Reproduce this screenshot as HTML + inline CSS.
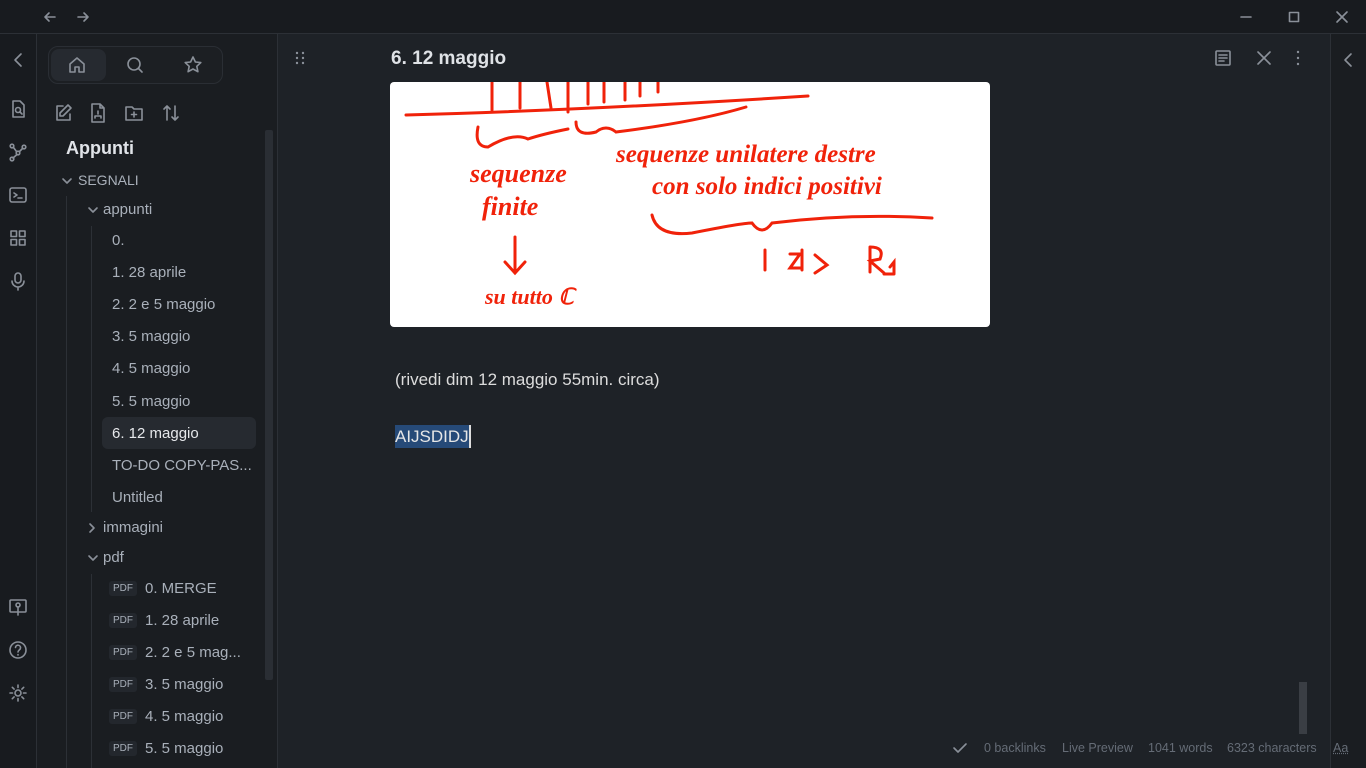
<!DOCTYPE html>
<html><head><meta charset="utf-8"><style>
*{margin:0;padding:0;box-sizing:border-box}
body{width:1366px;height:768px;background:#1e2227;font-family:"Liberation Sans",sans-serif;position:relative;overflow:hidden;color:#dadada}
.abs{position:absolute}
.title{left:0;top:0;width:1366px;height:34px;background:#181b1f;border-bottom:1px solid #2c3036}
.rib{left:0;top:34px;width:37px;height:734px;background:#181b1f;border-right:1px solid #2c3036}
.side{left:37px;top:34px;width:241px;height:734px;background:#1a1d21;border-right:1px solid #2c3036}
.rrib{left:1330px;top:34px;width:36px;height:734px;background:#1a1d21;border-left:1px solid #2c3036}
svg.i{position:absolute;fill:none;stroke:#8a9099;stroke-width:1.6;stroke-linecap:round;stroke-linejoin:round}
.it{position:absolute;font-size:15px;color:#a9b0ba;white-space:nowrap}
.pdf{display:inline-block;font-size:10px;background:#23272d;color:#a9b0ba;padding:2px 4px;border-radius:3px;margin-right:8px;vertical-align:2px}
.stat{position:absolute;top:741px;font-size:12.5px;color:#656c76}
</style></head><body>
<div class="abs title"></div>
<svg class="i" style="left:42px;top:9px" width="16" height="16" viewBox="0 0 16 16"><path d="M13 8H3M7 4L3 8l4 4"/></svg>
<svg class="i" style="left:75px;top:9px" width="16" height="16" viewBox="0 0 16 16"><path d="M3 8h10M9 4l4 4-4 4"/></svg>
<svg class="i" style="left:1238px;top:9px" width="16" height="16" viewBox="0 0 16 16"><path d="M3 8h10"/></svg>
<svg class="i" style="left:1286px;top:9px" width="16" height="16" viewBox="0 0 16 16"><rect x="3.5" y="3.5" width="9" height="9"/></svg>
<svg class="i" style="left:1334px;top:9px" width="16" height="16" viewBox="0 0 16 16"><path d="M3 3l10 10M13 3L3 13"/></svg>
<div class="abs rib"></div>
<svg class="i" style="left:8px;top:50px" width="20" height="20" viewBox="0 0 20 20"><path d="M13 4l-6 6 6 6"/></svg>
<svg class="i" style="left:8px;top:99px" width="20" height="20" viewBox="0 0 20 20"><path d="M5 2h7l4 4v12H5z"/><circle cx="10" cy="11" r="2.5"/><path d="M12 13l2 2"/></svg>
<svg class="i" style="left:8px;top:142px" width="20" height="20" viewBox="0 0 20 20"><circle cx="4" cy="4" r="1.8"/><circle cx="16" cy="5" r="1.8"/><circle cx="10" cy="11" r="1.8"/><circle cx="4" cy="17" r="1.8"/><path d="M5.5 5.5l3 4M14.5 6.5l-3 3M9 12.5l-4 3.5"/></svg>
<svg class="i" style="left:8px;top:185px" width="20" height="20" viewBox="0 0 20 20"><rect x="2" y="3" width="16" height="14" rx="2"/><path d="M6 8l3 2-3 2M10 13h4"/></svg>
<svg class="i" style="left:8px;top:228px" width="20" height="20" viewBox="0 0 20 20"><rect x="3" y="3" width="5.5" height="5.5"/><rect x="11.5" y="3" width="5.5" height="5.5"/><rect x="3" y="11.5" width="5.5" height="5.5"/><rect x="11.5" y="11.5" width="5.5" height="5.5"/></svg>
<svg class="i" style="left:8px;top:271px" width="20" height="20" viewBox="0 0 20 20"><rect x="7" y="2" width="6" height="10" rx="3"/><path d="M4 10a6 6 0 0 0 12 0M10 16v3"/></svg>
<svg class="i" style="left:8px;top:597px" width="20" height="20" viewBox="0 0 20 20"><rect x="2" y="3" width="16" height="12" rx="1"/><circle cx="10" cy="8" r="2"/><path d="M10 10v8"/></svg>
<svg class="i" style="left:8px;top:640px" width="20" height="20" viewBox="0 0 20 20"><circle cx="10" cy="10" r="8"/><path d="M7.5 7.5a2.5 2.5 0 0 1 5 .5c0 2-2.5 2-2.5 4M10 14.5v.5"/></svg>
<svg class="i" style="left:8px;top:683px" width="20" height="20" viewBox="0 0 20 20"><circle cx="10" cy="10" r="3"/><path d="M10 2v2.5M10 15.5V18M2 10h2.5M15.5 10H18M4.3 4.3l1.8 1.8M13.9 13.9l1.8 1.8M4.3 15.7l1.8-1.8M13.9 6.1l1.8-1.8"/></svg>
<div class="abs side"></div>
<div class="abs" style="left:48px;top:46px;width:175px;height:38px;border:1px solid #2a2e34;border-radius:10px;background:#1c1f23"></div>
<div class="abs" style="left:51px;top:49px;width:55px;height:32px;border-radius:8px;background:#262a30"></div>
<svg class="i" style="left:67px;top:55px" width="20" height="20" viewBox="0 0 20 20"><path d="M3 9l7-6 7 6v8H12v-5H8v5H3z"/></svg>
<svg class="i" style="left:125px;top:55px" width="20" height="20" viewBox="0 0 20 20"><circle cx="9" cy="9" r="6"/><path d="M13.5 13.5L17 17"/></svg>
<svg class="i" style="left:183px;top:55px" width="20" height="20" viewBox="0 0 20 20"><path d="M10 2l2.4 5 5.4.6-4 3.7 1.1 5.4L10 14l-4.9 2.7 1.1-5.4-4-3.7 5.4-.6z"/></svg>
<svg class="i" style="left:53px;top:103px" width="20" height="20" viewBox="0 0 20 20"><path d="M10 3H4v14h13v-6M15 2l3 3-8 8H7v-3z"/></svg>
<svg class="i" style="left:88px;top:102px" width="20" height="22" viewBox="0 0 20 22"><path d="M4 2h8l4 4v14H4zM12 2v4h4"/><path d="M10 9v3M7 16v-2h6v2"/></svg>
<svg class="i" style="left:124px;top:103px" width="20" height="20" viewBox="0 0 20 20"><path d="M2 4h6l2 2h8v11H2zM10 9v5M7.5 11.5h5"/></svg>
<svg class="i" style="left:161px;top:103px" width="20" height="20" viewBox="0 0 20 20"><path d="M6 17V3M3 6l3-3 3 3M14 3v14M11 14l3 3 3-3"/></svg>
<div class="abs" style="left:265px;top:130px;width:8px;height:550px;background:#2a2e34;border-radius:2px"></div>
<div class="it" style="left:66px;top:138px;font-size:18px;font-weight:bold;color:#e0e3e8">Appunti</div>
<svg class="i" style="left:61px;top:175px" width="12" height="12" viewBox="0 0 12 12"><path d="M2 4l4 4 4-4"/></svg>
<div class="it" style="left:78px;top:172px;font-size:14px">SEGNALI</div>
<div class="abs" style="left:66px;top:196px;width:1px;height:572px;background:#2c3036"></div>
<svg class="i" style="left:87px;top:204px" width="12" height="12" viewBox="0 0 12 12"><path d="M2 4l4 4 4-4"/></svg>
<div class="it" style="left:103px;top:201px">appunti</div>
<div class="abs" style="left:91px;top:226px;width:1px;height:286px;background:#2c3036"></div>
<div class="it" style="left:112px;top:232px">0.</div>
<div class="it" style="left:112px;top:264px">1. 28 aprile</div>
<div class="it" style="left:112px;top:296px">2. 2 e 5 maggio</div>
<div class="it" style="left:112px;top:328px">3. 5 maggio</div>
<div class="it" style="left:112px;top:360px">4. 5 maggio</div>
<div class="it" style="left:112px;top:393px">5. 5 maggio</div>
<div class="abs" style="left:102px;top:417px;width:154px;height:32px;background:#262a30;border-radius:6px"></div>
<div class="it" style="left:112px;top:425px;color:#e6e8eb">6. 12 maggio</div>
<div class="it" style="left:112px;top:457px">TO-DO COPY-PAS...</div>
<div class="it" style="left:112px;top:489px">Untitled</div>
<svg class="i" style="left:86px;top:522px" width="12" height="12" viewBox="0 0 12 12"><path d="M4 2l4 4-4 4"/></svg>
<div class="it" style="left:103px;top:519px">immagini</div>
<svg class="i" style="left:87px;top:552px" width="12" height="12" viewBox="0 0 12 12"><path d="M2 4l4 4 4-4"/></svg>
<div class="it" style="left:103px;top:549px">pdf</div>
<div class="abs" style="left:91px;top:574px;width:1px;height:194px;background:#2c3036"></div>
<div class="it" style="left:109px;top:580px"><span class="pdf">PDF</span>0. MERGE</div>
<div class="it" style="left:109px;top:612px"><span class="pdf">PDF</span>1. 28 aprile</div>
<div class="it" style="left:109px;top:644px"><span class="pdf">PDF</span>2. 2 e 5 mag...</div>
<div class="it" style="left:109px;top:676px"><span class="pdf">PDF</span>3. 5 maggio</div>
<div class="it" style="left:109px;top:708px"><span class="pdf">PDF</span>4. 5 maggio</div>
<div class="it" style="left:109px;top:740px"><span class="pdf">PDF</span>5. 5 maggio</div>
<div class="abs rrib"></div>
<svg class="i" style="left:1338px;top:50px" width="20" height="20" viewBox="0 0 20 20"><path d="M13 4l-6 6 6 6"/></svg>
<svg class="i" style="left:293px;top:50px;stroke-width:2.4" width="14" height="16" viewBox="0 0 14 16"><path d="M4 3v0M10 3v0M4 8v0M10 8v0M4 13v0M10 13v0"/></svg>
<div class="abs" style="left:391px;top:48px;font-size:19px;font-weight:bold;color:#dfe2e6">6. 12 maggio</div>
<svg class="i" style="left:1213px;top:48px" width="20" height="20" viewBox="0 0 20 20"><rect x="3" y="3" width="14" height="14" rx="1"/><path d="M6 7h8M6 10h8M6 13h5"/></svg>
<svg class="i" style="left:1255px;top:49px" width="18" height="18" viewBox="0 0 18 18"><path d="M3 3l12 12M15 3L3 15"/></svg>
<svg class="i" style="left:1290px;top:49px;stroke-width:2.4" width="16" height="18" viewBox="0 0 16 18"><path d="M8 3v0M8 9v0M8 15v0"/></svg>
<svg class="abs" style="left:390px;top:82px" width="600" height="245" viewBox="0 0 600 245">
<rect width="600" height="245" rx="4" fill="#fff"/>
<g fill="none" stroke="#f0220a" stroke-width="3" stroke-linecap="round">
<path d="M16 33Q200 28 418 14"/>
<path d="M102 0v28M130 0v26M157 0l4 26M178 0v30M198 0v22M214 0v20M235 0v18M250 0v14M268 0v10"/>
<path d="M88 45q-4 20 10 20q25-15 40-8q15 -5 40-10"/><path d="M186 40q0 15 20 10q10-8 20 0q80-10 130-25"/>
<path d="M125 155v35M115 180l10 11 10-11"/>
<path d="M262 133q5 22 40 18q50-10 60-10q10 14 20 0q80-10 160-5"/>
<path d="M375 168v20M412 168v20M425 173l12 10-12 8M480 165v25M480 165q15 0 10 12l-10 2 14 12M500 185l4-5v12M494 192h10"/>
<path d="M400 172h10l-10 14h12"/>
</g>
<g fill="#f0220a" font-family="Liberation Serif,serif" font-style="italic" font-weight="bold" font-size="26">
<text x="80" y="100">sequenze</text><text x="92" y="133">finite</text>
<text x="95" y="222" font-size="22">su tutto ℂ</text>
<text x="226" y="80" font-size="25">sequenze unilatere destre</text>
<text x="262" y="112" font-size="25">con solo indici positivi</text>
</g>
</svg>
<div class="abs" style="left:395px;top:370px;font-size:17px;color:#dcdcdc">(rivedi dim 12 maggio 55min. circa)</div>
<div class="abs" style="left:395px;top:425px;height:23px;padding-top:2px;background:#264a78;font-size:17px;color:#e6e6e6;border-right:2px solid #ddd">AIJSDIDJ</div>
<div class="abs" style="left:1299px;top:682px;width:8px;height:52px;background:#3a3e44"></div>
<svg class="i" style="left:952px;top:740px" width="16" height="16" viewBox="0 0 16 16"><path d="M2 8l4 4 8-8"/></svg>
<div class="stat" style="left:984px">0 backlinks</div>
<div class="stat" style="left:1062px">Live Preview</div>
<div class="stat" style="left:1148px">1041 words</div>
<div class="stat" style="left:1227px">6323 characters</div>
<div class="stat" style="left:1333px;text-decoration:underline dotted">Aa</div>
</body></html>
